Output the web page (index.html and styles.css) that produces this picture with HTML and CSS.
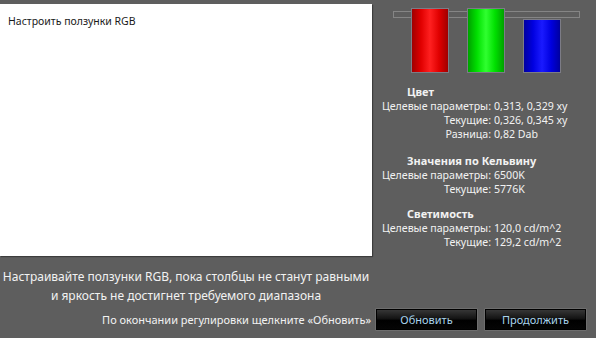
FILE: index.html
```html
<!DOCTYPE html>
<html lang="ru">
<head>
<meta charset="utf-8">
<title>Настроить ползунки RGB</title>
<link rel="stylesheet" href="styles.css">
</head>
<body>
<div class="app">
  <div class="canvas">
    <div class="canvas-title">Настроить ползунки RGB</div>
  </div>
  <div class="side">
    <div class="bars">
      <div class="range"></div>
      <div class="bar red" style="height:63px"></div>
      <div class="bar green" style="height:63px"></div>
      <div class="bar blue" style="height:52px"></div>
    </div>
    <div class="stats">
      <div class="heading">Цвет</div>
      <div class="label">Целевые параметры:</div><div class="value">0,313, 0,329 xy</div>
      <div class="label">Текущие:</div><div class="value">0,326, 0,345 xy</div>
      <div class="label">Разница:</div><div class="value">0,82 Dab</div>
      <div class="heading gap1">Значения по Кельвину</div>
      <div class="label">Целевые параметры:</div><div class="value">6500K</div>
      <div class="label">Текущие:</div><div class="value">5776K</div>
      <div class="heading gap2">Светимость</div>
      <div class="label">Целевые параметры:</div><div class="value">120,0 cd/m^2</div>
      <div class="label">Текущие:</div><div class="value">129,2 cd/m^2</div>
    </div>
  </div>
  <div class="instructions">
    <div class="line">Настраивайте ползунки RGB, пока столбцы не станут равными</div>
    <div class="line">и яркость не достигнет требуемого диапазона</div>
  </div>
  <div class="footer">
    <span class="note">По окончании регулировки щелкните «Обновить»</span>
    <button class="btn">Обновить</button>
    <button class="btn">Продолжить</button>
  </div>
</div>
</body>
</html>
```
FILE: styles.css
```css
html, body {
  margin: 0;
  padding: 0;
  background: #5e5e5e;
  width: 596px;
  height: 338px;
  overflow: hidden;
}
.app {
  display: grid;
  grid-template-columns: 372px 224px;
  align-items: start;
  font-family: "Noto Sans", "Open Sans", sans-serif;
  color: #f2f2f2;
}
.canvas {
  grid-column: 1;
  grid-row: 1;
  margin-top: 4px;
  height: 252px;
  background: #ffffff;
  box-shadow: 1px 1px 1px rgba(0,0,0,0.35);
}
.canvas-title {
  padding: 10px 0 0 8px;
  font-size: 10.5px;
  line-height: 14px;
  color: #1a1a1a;
}
.side {
  grid-column: 2;
  grid-row: 1;
}
.bars {
  position: relative;
  display: flex;
  align-items: flex-end;
  gap: 18px;
  height: 73px;
  padding-left: 39px;
}
.range {
  position: absolute;
  left: 21px;
  top: 11px;
  width: 185px;
  height: 5px;
  border: 1px solid #858585;
}
.bar {
  position: relative;
  width: 36px;
  border: 1px solid #7c7c86;
}
.red {
  background: linear-gradient(to right, #a00000 0%, #e00000 25%, #ff2020 50%, #e00000 75%, #a00000 100%);
}
.green {
  background: linear-gradient(to right, #00a000 0%, #00e000 25%, #30ff30 50%, #00e000 75%, #00a000 100%);
}
.blue {
  background: linear-gradient(to right, #0000a0 0%, #0000e0 25%, #1a1aff 50%, #0000e0 75%, #0000a0 100%);
}
.stats {
  display: grid;
  grid-template-columns: 119px 1fr;
  column-gap: 3px;
  margin-top: 11px;
  font-size: 10.6px;
  line-height: 14px;
}
.heading {
  grid-column: 1 / -1;
  padding-left: 35px;
  font-weight: bold;
  font-size: 11px;
  line-height: 15px;
}
.gap1 { margin-top: 12px; }
.gap2 { margin-top: 10px; }
.label {
  text-align: right;
  white-space: nowrap;
}
.value {
  white-space: nowrap;
}
.instructions {
  grid-column: 1;
  grid-row: 2;
  margin-top: 11px;
  text-align: center;
  font-size: 12px;
  line-height: 19px;
}
.line {
  white-space: nowrap;
}
.footer {
  grid-column: 1 / -1;
  grid-row: 3;
  display: flex;
  justify-content: flex-end;
  align-items: center;
  padding-right: 9px;
  margin-top: 2px;
  height: 24px;
}
.note {
  font-size: 11px;
  white-space: nowrap;
  margin-right: 4px;
}
.btn {
  width: 103px;
  height: 23px;
  padding: 0;
  border: 1px solid #6e6e6e;
  border-radius: 1px;
  background: linear-gradient(to bottom, #3a3a3a 0%, #141414 45%, #000 55%, #050505 100%);
  box-shadow: inset 0 0 0 1px #000;
  color: #a9d4ec;
  font-family: "Noto Sans", "Open Sans", sans-serif;
  font-size: 11px;
}
.btn + .btn {
  margin-left: 6px;
}
```
